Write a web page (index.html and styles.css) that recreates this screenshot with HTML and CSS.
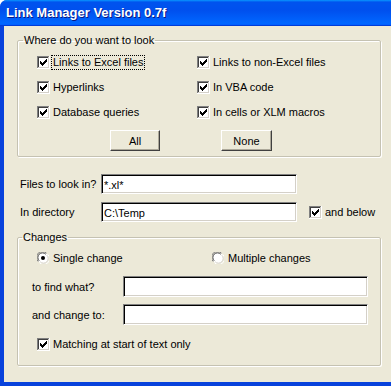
FILE: index.html
```html
<!DOCTYPE html>
<html lang="en">
<head>
  <meta charset="UTF-8" />
  <title>Link Manager Version 0.7f</title>
  <link rel="stylesheet" href="styles.css">
</head>
<body>
  <svg width="0" height="0" class="defs">
    <symbol id="chk" viewBox="0 0 13 13">
      <rect x="0" y="0" width="13" height="13" fill="#fff" />
      <path d="M0 0h12v1h-11v11h-1z" fill="#808080" />
      <path d="M1 1h10v1h-9v9h-1z" fill="#404040" />
      <path d="M12 0h1v13h-13v-1h12z" fill="#fff" />
      <path d="M11 1h1v11h-11v-1h10z" fill="#d4d0c8" />
      <path d="M3 5h1v3h-1z M4 6h1v3h-1z M5 7h1v3h-1z M6 6h1v3h-1z M7 5h1v3h-1z M8 4h1v3h-1z M9 3h1v3h-1z" fill="#000" />
    </symbol>
    <symbol id="radio-on" viewBox="0 0 12 12">
      <circle cx="6" cy="6" r="5.5" fill="#fff" />
      <path d="M1.2 9.5 A5.5 5.5 0 0 1 9.5 1.2" fill="none" stroke="#808080" stroke-width="1" />
      <path d="M2.2 8.8 A4.5 4.5 0 0 1 8.8 2.2" fill="none" stroke="#404040" stroke-width="1" />
      <path d="M2.5 10.8 A5.5 5.5 0 0 0 10.8 2.5" fill="none" stroke="#fff" stroke-width="1" />
      <path d="M3.2 9.8 A4.5 4.5 0 0 0 9.8 3.2" fill="none" stroke="#d4d0c8" stroke-width="1" />
      <circle cx="6" cy="6" r="2" fill="#000" />
    </symbol>
    <symbol id="radio-off" viewBox="0 0 12 12">
      <circle cx="6" cy="6" r="5.5" fill="#fff" />
      <path d="M1.2 9.5 A5.5 5.5 0 0 1 9.5 1.2" fill="none" stroke="#808080" stroke-width="1" />
      <path d="M2.2 8.8 A4.5 4.5 0 0 1 8.8 2.2" fill="none" stroke="#404040" stroke-width="1" />
      <path d="M2.5 10.8 A5.5 5.5 0 0 0 10.8 2.5" fill="none" stroke="#fff" stroke-width="1" />
      <path d="M3.2 9.8 A4.5 4.5 0 0 0 9.8 3.2" fill="none" stroke="#d4d0c8" stroke-width="1" />
    </symbol>
  </svg>

  <div class="window">
    <div class="titlebar">Link Manager Version 0.7f</div>

    <div class="client">
      <fieldset class="group look">
        <legend>Where do you want to look</legend>
        <div class="check-grid">
          <label class="check"><svg class="box"><use href="#chk" /></svg><span class="focus">Links to Excel files</span></label>
          <label class="check"><svg class="box"><use href="#chk" /></svg><span>Links to non-Excel files</span></label>
          <label class="check"><svg class="box"><use href="#chk" /></svg><span>Hyperlinks</span></label>
          <label class="check"><svg class="box"><use href="#chk" /></svg><span>In VBA code</span></label>
          <label class="check"><svg class="box"><use href="#chk" /></svg><span>Database queries</span></label>
          <label class="check"><svg class="box"><use href="#chk" /></svg><span>In cells or XLM macros</span></label>
        </div>
        <div class="buttons">
          <button class="btn btn-all">All</button>
          <button class="btn btn-none">None</button>
        </div>
      </fieldset>

      <div class="files">
        <label class="field-label">Files to look in?</label>
        <input class="text" type="text" value="*.xl*" />
        <span></span>
        <label class="field-label">In directory</label>
        <input class="text" type="text" value="C:\Temp" />
        <label class="check below"><svg class="box"><use href="#chk" /></svg><span>and below</span></label>
      </div>

      <fieldset class="group changes">
        <legend>Changes</legend>
        <div class="radios">
          <label class="radio"><svg class="dot"><use href="#radio-on" /></svg><span>Single change</span></label>
          <label class="radio"><svg class="dot"><use href="#radio-off" /></svg><span>Multiple changes</span></label>
        </div>
        <div class="change-grid">
          <label class="field-label">to find what?</label>
          <input class="text" type="text" />
          <label class="field-label">and change to:</label>
          <input class="text" type="text" />
        </div>
        <label class="check match"><svg class="box"><use href="#chk" /></svg><span>Matching at start of text only</span></label>
      </fieldset>
    </div>
  </div>
</body>
</html>
```

FILE: styles.css
```css
body {
  margin: 0;
  background: #ffffff;
  font-family: 'Liberation Sans', Arial, sans-serif;
  font-size: 11px;
  color: #000;
}

.defs {
  position: absolute;
}

.window {
  width: 391px;
  height: 386px;
  display: flex;
  flex-direction: column;
  background: #0842dc;
  border-radius: 7px 0 0 0;
  overflow: hidden;
}

.titlebar {
  height: 26px;
  flex: 0 0 26px;
  box-sizing: border-box;
  padding: 5px 0 0 6px;
  color: #fff;
  font-weight: bold;
  font-size: 13px;
  line-height: 16px;
  text-shadow: 1px 1px 0 #0a1883;
  background: linear-gradient(180deg, #0997ff, #0053ee 8%, #0050ee 40%, #0066ff 88%, #0066ff 93%, #005bff 95%, #003dd7 96%, #003dd7);
}

.client {
  flex: 1;
  margin: 0 0 4px 4px;
  padding: 0 10px 0 13px;
  background: #ece9d8;
}

.group {
  margin: 0;
  border: 1px solid #c5c2b2;
  box-shadow: inset 1px 1px 0 #fff, 1px 1px 0 #fff;
  border-radius: 2px;
}

.group legend {
  padding: 0 1px;
  line-height: 13px;
}

.look {
  margin-top: 8px;
  height: 123px;
  box-sizing: border-box;
  padding: 3px 0 0 19px;
}

.look legend {
  margin-left: -14px;
}

.check-grid {
  display: grid;
  grid-template-columns: 160px 1fr;
  grid-auto-rows: 25px;
}

.check {
  display: flex;
  align-items: center;
  gap: 2px;
  white-space: nowrap;
}

.check .box {
  width: 13px;
  height: 13px;
  flex: 0 0 13px;
}

.check span {
  padding: 0 1px;
  line-height: 13px;
}

.check .focus {
  outline: 1px dotted #000;
}

.buttons {
  display: flex;
  gap: 61px;
  padding-left: 73px;
  margin-top: 5px;
}

.btn {
  width: 50px;
  height: 21px;
  padding: 0;
  font: inherit;
  color: #000;
  background: #ece9d8;
  border: 1px solid;
  border-color: #fff #404040 #404040 #fff;
  box-shadow: inset -1px -1px 0 #aca899;
}

.btn-none {
  width: 51px;
}

.files {
  display: grid;
  grid-template-columns: 81px 196px auto;
  row-gap: 8px;
  align-items: center;
  margin: 17px 0 0 3px;
}

.files .below {
  margin-left: 12px;
}

.field-label {
  white-space: nowrap;
}

.text {
  box-sizing: border-box;
  width: 100%;
  height: 20px;
  margin: 0;
  padding: 2px 2px 0;
  font: inherit;
  color: #000;
  background: #fff;
  border: 1px solid;
  border-color: #808080 #fff #fff #808080;
  box-shadow: inset 1px 1px 0 #000, inset -1px -1px 0 #d4d0c8;
  outline: none;
}

.changes {
  margin-top: 9px;
  height: 135px;
  box-sizing: border-box;
  padding: 8px 0 0 14px;
}

.changes legend {
  margin-left: -10px;
}

.radios {
  display: grid;
  grid-template-columns: 175px 1fr;
  padding-left: 5px;
}

.radio {
  display: flex;
  align-items: center;
  gap: 4px;
  white-space: nowrap;
}

.radio .dot {
  width: 12px;
  height: 12px;
}

.change-grid {
  display: grid;
  grid-template-columns: 91px 245px;
  row-gap: 7px;
  align-items: center;
  margin-top: 12px;
}

.change-grid .text {
  height: 21px;
}

.match {
  margin: 13px 0 0 5px;
}
```
